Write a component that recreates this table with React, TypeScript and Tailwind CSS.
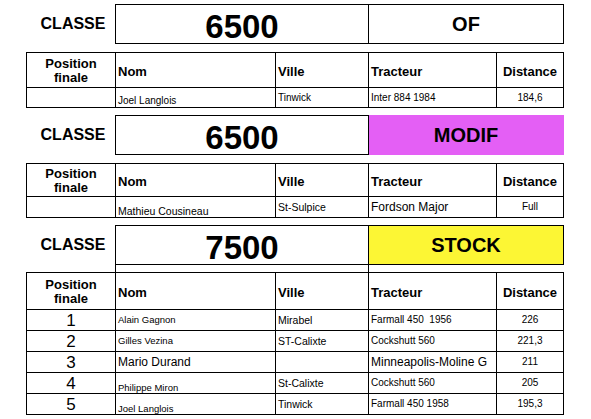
import React from "react";

type Cell = { t: string; sz?: string; num?: boolean; low?: boolean };

type Section = {
  classe: string;
  cat: string;
  catStyle: string;
  headH: string;
  rowH: string;
  spacer?: boolean;
  rows: Cell[][];
};

const sections: Section[] = [
  {
    classe: "6500",
    cat: "OF",
    catStyle: "border-black bg-white",
    headH: "h-[35px]",
    rowH: "h-[20px]",
    rows: [
      [
        { t: "" },
        { t: "Joel Langlois", low: true },
        { t: "Tinwick" },
        { t: "Inter 884 1984" },
        { t: "184,6" },
      ],
    ],
  },
  {
    classe: "6500",
    cat: "MODIF",
    catStyle: "border-[#e45ff5] bg-[#e45ff5]",
    headH: "h-[33px]",
    rowH: "h-[21px]",
    rows: [
      [
        { t: "" },
        { t: "Mathieu Cousineau", low: true, sz: "text-[10.5px]" },
        { t: "St-Sulpice", sz: "text-[10.5px]" },
        { t: "Fordson Major", sz: "text-[12px]" },
        { t: "Full" },
      ],
    ],
  },
  {
    classe: "7500",
    cat: "STOCK",
    catStyle: "border-black bg-[#fcf634]",
    headH: "h-[37px]",
    rowH: "h-[21px]",
    spacer: true,
    rows: [
      [
        { t: "1", num: true },
        { t: "Alain Gagnon", sz: "text-[9.5px]" },
        { t: "Mirabel", sz: "text-[10.5px]" },
        { t: "Farmall 450\u00a0 1956" },
        { t: "226" },
      ],
      [
        { t: "2", num: true },
        { t: "Gilles Vezina", sz: "text-[9.5px]" },
        { t: "ST-Calixte", sz: "text-[10.5px]" },
        { t: "Cockshutt 560" },
        { t: "221,3" },
      ],
      [
        { t: "3", num: true },
        { t: "Mario Durand", sz: "text-[12px]" },
        { t: "" },
        { t: "Minneapolis-Moline G", sz: "text-[12px]" },
        { t: "211" },
      ],
      [
        { t: "4", num: true },
        { t: "Philippe Miron", low: true, sz: "text-[9.5px]" },
        { t: "St-Calixte", sz: "text-[10.5px]" },
        { t: "Cockshutt 560" },
        { t: "205" },
      ],
      [
        { t: "5", num: true },
        { t: "Joel Langlois", low: true, sz: "text-[9.5px]" },
        { t: "Tinwick", sz: "text-[10.5px]" },
        { t: "Farmall 450 1958" },
        { t: "195,3" },
      ],
    ],
  },
];

const grid = "grid grid-cols-[89px_160px_93px_128px_67px]";

function DataCell({ c, i, h }: { c: Cell; i: number; h: string }) {
  const center = i === 0 || i === 4;
  const size = c.num ? "text-[17px]" : c.sz ?? "text-[10px]";
  return (
    <div
      className={`${h} border-r border-b border-black flex overflow-hidden whitespace-nowrap leading-none ${size} ${
        center ? "justify-center" : "pl-[2px]"
      } ${c.low ? "items-end pb-[1px]" : "items-center"}`}
    >
      {c.t}
    </div>
  );
}

function Block({ s }: { s: Section }) {
  return (
    <div>
      <div className="flex h-[40px]">
        <div className="w-[89px] flex items-center justify-center pl-[5px] text-[16px] font-bold">
          CLASSE
        </div>
        <div className="w-[254px] border border-black flex items-center justify-center pt-[4px] text-[33px] font-bold leading-none">
          {s.classe}
        </div>
        <div
          className={`w-[195px] border-y border-r flex items-center justify-center text-[20px] font-bold leading-none ${s.catStyle}`}
        >
          {s.cat}
        </div>
      </div>
      {s.spacer ? (
        <div className="ml-[89px] w-[254px] h-[7px] border-x border-black" />
      ) : (
        <div className="h-[7px]" />
      )}
      <div className={`w-[538px] border-l border-t border-black ${s.spacer ? "" : "mt-[1px]"}`}>
        <div className={`${grid} font-bold text-[13px] leading-none`}>
          <div className={`${s.headH} border-r border-b border-black flex flex-col items-center justify-center gap-[1px]`}>
            <span>Position</span>
            <span>finale</span>
          </div>
          <div className={`${s.headH} border-r border-b border-black flex items-center pl-[2px] pt-[2px]`}>Nom</div>
          <div className={`${s.headH} border-r border-b border-black flex items-center pl-[2px] pt-[2px]`}>Ville</div>
          <div className={`${s.headH} border-r border-b border-black flex items-center pl-[2px] pt-[2px]`}>Tracteur</div>
          <div className={`${s.headH} border-r border-b border-black flex items-center justify-center pt-[2px]`}>Distance</div>
        </div>
        {s.rows.map((r, ri) => (
          <div key={ri} className={grid}>
            {r.map((c, i) => (
              <DataCell key={i} c={c} i={i} h={s.rowH} />
            ))}
          </div>
        ))}
      </div>
    </div>
  );
}

export default function App() {
  return (
    <div className="w-[591px] h-[419px] bg-white text-black pt-[4px] pl-[26px] font-['Liberation_Sans',Arial,sans-serif] overflow-hidden">
      <div className="flex flex-col gap-[7px]">
        {sections.map((s, i) => (
          <Block key={i} s={s} />
        ))}
      </div>
    </div>
  );
}
